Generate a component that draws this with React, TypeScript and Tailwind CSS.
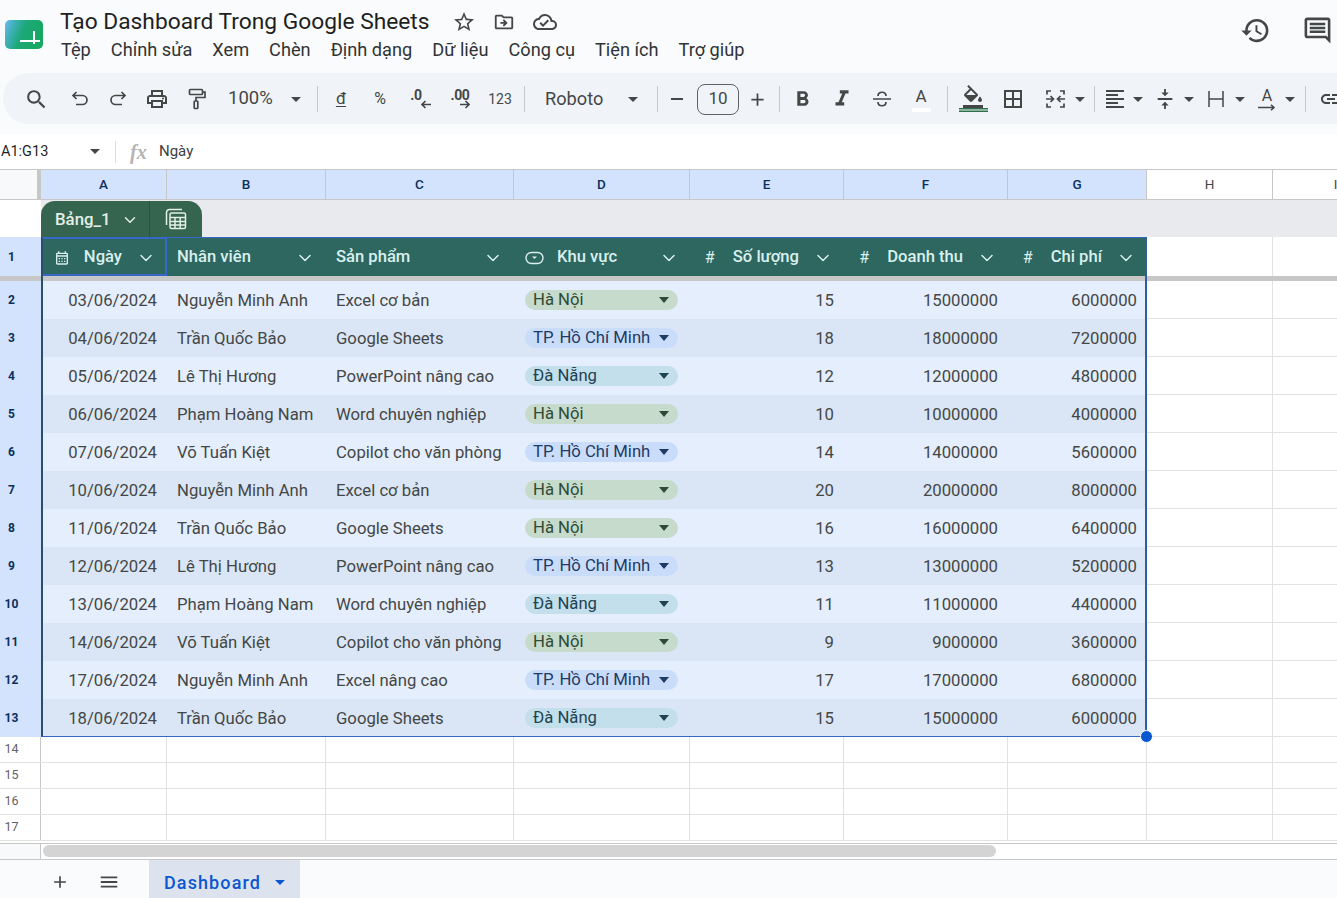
import type { ReactNode } from 'react';
import { ChevronDown } from 'lucide-react';
import {
  MdAdd,
  MdBorderAll,
  MdFormatAlignLeft,
  MdFormatBold,
  MdFormatColorFill,
  MdFormatItalic,
  MdHistory,
  MdLink,
  MdMenu,
  MdOutlineCalendarMonth,
  MdOutlineCloudDone,
  MdOutlineComment,
  MdOutlineDriveFileMove,
  MdOutlinePrint,
  MdSearch,
  MdStarBorder,
  MdVerticalAlignCenter,
} from 'react-icons/md';

const COLS = [
  'w-[126px] shrink-0',
  'w-[159px] shrink-0',
  'w-[188px] shrink-0',
  'w-[176px] shrink-0',
  'w-[154px] shrink-0',
  'w-[164px] shrink-0',
  'w-[139px] shrink-0',
  'w-[126px] shrink-0',
  'w-[126px] shrink-0',
];
const LETTERS = ['A', 'B', 'C', 'D', 'E', 'F', 'G', 'H', 'I'];

const MENU = ['Tệp', 'Chỉnh sửa', 'Xem', 'Chèn', 'Định dạng', 'Dữ liệu', 'Công cụ', 'Tiện ích', 'Trợ giúp'];

type Region = 'Hà Nội' | 'TP. Hồ Chí Minh' | 'Đà Nẵng';

const ROWS: [string, string, string, Region, number, number, number][] = [
  ['03/06/2024', 'Nguyễn Minh Anh', 'Excel cơ bản', 'Hà Nội', 15, 15000000, 6000000],
  ['04/06/2024', 'Trần Quốc Bảo', 'Google Sheets', 'TP. Hồ Chí Minh', 18, 18000000, 7200000],
  ['05/06/2024', 'Lê Thị Hương', 'PowerPoint nâng cao', 'Đà Nẵng', 12, 12000000, 4800000],
  ['06/06/2024', 'Phạm Hoàng Nam', 'Word chuyên nghiệp', 'Hà Nội', 10, 10000000, 4000000],
  ['07/06/2024', 'Võ Tuấn Kiệt', 'Copilot cho văn phòng', 'TP. Hồ Chí Minh', 14, 14000000, 5600000],
  ['10/06/2024', 'Nguyễn Minh Anh', 'Excel cơ bản', 'Hà Nội', 20, 20000000, 8000000],
  ['11/06/2024', 'Trần Quốc Bảo', 'Google Sheets', 'Hà Nội', 16, 16000000, 6400000],
  ['12/06/2024', 'Lê Thị Hương', 'PowerPoint nâng cao', 'TP. Hồ Chí Minh', 13, 13000000, 5200000],
  ['13/06/2024', 'Phạm Hoàng Nam', 'Word chuyên nghiệp', 'Đà Nẵng', 11, 11000000, 4400000],
  ['14/06/2024', 'Võ Tuấn Kiệt', 'Copilot cho văn phòng', 'Hà Nội', 9, 9000000, 3600000],
  ['17/06/2024', 'Nguyễn Minh Anh', 'Excel nâng cao', 'TP. Hồ Chí Minh', 17, 17000000, 6800000],
  ['18/06/2024', 'Trần Quốc Bảo', 'Google Sheets', 'Đà Nẵng', 15, 15000000, 6000000],
];

const PILL: Record<Region, string> = {
  'Hà Nội': 'bg-[#c6dbcb] text-[#2f4a36]',
  'TP. Hồ Chí Minh': 'bg-[#c9ddfb] text-[#1f3a63]',
  'Đà Nẵng': 'bg-[#c2dfeb] text-[#1f4252]',
};

function Slot({ c, children }: { c: string; children?: ReactNode }) {
  return <div className={`flex h-[30px] shrink-0 items-center justify-center ${c}`}>{children}</div>;
}

function Sep({ c = '' }: { c?: string }) {
  return <div className={`h-[26px] w-px shrink-0 bg-[#c7c9cc] ${c}`} />;
}

function Caret({ c = 'w-5' }: { c?: string }) {
  return (
    <Slot c={c}>
      <span className="h-0 w-0 border-x-[5px] border-t-[5px] border-x-transparent border-t-[#444746]" />
    </Slot>
  );
}

function TopBar() {
  return (
    <div className="flex h-[73px] bg-[#f9fbfd] text-[#1f1f1f]">
      <svg className="ml-[5px] mt-[20px] shrink-0" width="38" height="29" viewBox="0 0 38 29">
        <defs>
          <linearGradient id="logo" x1="0" x2="1" y1="0" y2="0.3">
            <stop offset="0" stopColor="#6cbcf0" />
            <stop offset="0.25" stopColor="#3fb0b8" />
            <stop offset="0.55" stopColor="#1ca878" />
            <stop offset="1" stopColor="#17a862" />
          </linearGradient>
        </defs>
        <rect width="38" height="29" rx="5" fill="url(#logo)" />
        <path d="M15 21h20M29 11v13" stroke="#fff" strokeWidth="2" fill="none" />
      </svg>
      <div className="ml-[17px] flex flex-col">
        <div className="mt-[7px] flex h-[30px] items-center">
          <span className="text-[22.75px] leading-[30px] font-normal">Tạo Dashboard Trong Google Sheets</span>
          <MdStarBorder className="ml-[22px] text-[#444746]" size={24} />
          <MdOutlineDriveFileMove className="ml-[17px] text-[#444746]" size={22} />
          <MdOutlineCloudDone className="ml-[18px] text-[#444746]" size={24} />
        </div>
        <nav className="ml-px mt-[1px] flex gap-5 text-[18.2px] leading-[24px] text-[#303335]">
          {MENU.map((m) => (
            <span key={m}>{m}</span>
          ))}
        </nav>
      </div>
      <div className="ml-auto flex items-start pt-[15px]">
        <MdHistory className="text-[#444746]" size={31} />
        <MdOutlineComment className="ml-[31px] mr-[4px] text-[#444746]" size={31} />
      </div>
    </div>
  );
}

function Toolbar() {
  const ic = 'text-[#444746]';
  return (
    <div className="h-[61px] bg-[#f9fbfd]">
      <div className="ml-[3px] flex h-[51px] w-[1400px] items-center rounded-l-[25px] bg-[#f0f4f9] pl-[13px] pt-px text-[#444746]">
        <Slot c="w-[40px]"><MdSearch className={ic} size={25} /></Slot>
        <Slot c="ml-[5px] w-[38px]">
          <svg width="18" height="18" viewBox="0 0 18 18" fill="none" stroke="#444746" strokeWidth="1.7">
            <path d="M5.5 2 2 5.5 5.5 9M2 5.5h9.5a4.5 4.5 0 0 1 0 9H5" />
          </svg>
        </Slot>
        <Slot c="w-[38px]">
          <svg width="18" height="18" viewBox="0 0 18 18" fill="none" stroke="#444746" strokeWidth="1.7">
            <path d="M12.5 2 16 5.5 12.5 9M16 5.5H6.5a4.5 4.5 0 0 0 0 9H13" />
          </svg>
        </Slot>
        <Slot c="w-[40px]"><MdOutlinePrint className={ic} size={24} /></Slot>
        <Slot c="w-[40px]">
          <svg width="18" height="22" viewBox="0 0 18 22" fill="none" stroke="#444746" strokeWidth="1.7">
            <rect x="1.5" y="1.5" width="13" height="5" rx="1" />
            <path d="M14.5 4h2.5v5.5H8v3.5" />
            <rect x="6.2" y="13" width="3.6" height="7.5" rx=".8" />
          </svg>
        </Slot>
        <Slot c="ml-[11px] w-[46px] justify-start"><span className="text-[18.5px]">100%</span></Slot>
        <Caret c="ml-[12px] w-5" />
        <Sep c="ml-[11px]" />
        <Slot c="ml-[4px] w-[38px]"><span className="text-[17px] underline underline-offset-2">đ</span></Slot>
        <Slot c="w-[40px]"><span className="text-[16px]">%</span></Slot>
        <Slot c="w-[40px]">
          <span className="flex flex-col items-center">
            <span className="pr-[8px] text-[14px] leading-[11px] font-bold tracking-tight">.0</span>
            <svg className="ml-[12px] -mt-[1px]" width="10" height="9" viewBox="0 0 10 9" fill="none" stroke="#444746" strokeWidth="1.6"><path d="M10 4.5H1M4.5 1 1 4.5 4.5 8" /></svg>
          </span>
        </Slot>
        <Slot c="w-[40px]">
          <span className="flex flex-col items-center">
            <span className="text-[14px] leading-[11px] font-bold tracking-tight">.00</span>
            <svg className="ml-[10px] -mt-[1px]" width="10" height="9" viewBox="0 0 10 9" fill="none" stroke="#444746" strokeWidth="1.6"><path d="M0 4.5h9M5.5 1 9 4.5 5.5 8" /></svg>
          </span>
        </Slot>
        <Slot c="w-[40px]"><span className="text-[14px]">123</span></Slot>
        <Sep c="ml-[4px]" />
        <Slot c="ml-[20px] w-[60px] justify-start"><span className="text-[18.2px]">Roboto</span></Slot>
        <Caret c="ml-[18px] w-5" />
        <Sep c="ml-[14px]" />
        <Slot c="ml-[8px] w-[22px]"><span className="h-[2px] w-[12px] bg-[#444746]" /></Slot>
        <div className="ml-[9px] flex h-[31px] w-[42px] shrink-0 items-center justify-center rounded-lg border border-[#5f6368] text-[17px]">10</div>
        <Slot c="ml-[7px] w-[22px]"><MdAdd className={ic} size={21} /></Slot>
        <Sep c="ml-[11px]" />
        <Slot c="ml-[3px] w-[38px]"><MdFormatBold className={ic} size={25} /></Slot>
        <Slot c="ml-[1px] w-[40px]"><MdFormatItalic className={ic} size={26} /></Slot>
        <Slot c="w-[39px]">
          <svg width="20" height="20" viewBox="0 0 20 20" fill="none" stroke="#444746" strokeWidth="1.7">
            <path d="M1 10h18M14 7c0-5-8-5-8 0M6 13c0 5 8 5 8 0" />
          </svg>
        </Slot>
        <Slot c="w-[40px]">
          <span className="flex flex-col items-center">
            <span className="text-[17px] leading-[20px]">A</span>
            <span className="mt-[2px] h-[4px] w-[19px] bg-white" />
          </span>
        </Slot>
        <Sep c="ml-[6px]" />
        <Slot c="ml-[10px] w-[30px]">
          <span className="flex flex-col items-center">
            <MdFormatColorFill className={`${ic} -mt-[2px]`} size={24} />
            <span className="-mt-[1px] h-[4px] w-[29px] border-y border-[#2c6e4f] bg-[#8fb5a0]" />
          </span>
        </Slot>
        <Slot c="ml-[10px] w-[30px]"><MdBorderAll className={ic} size={24} /></Slot>
        <Slot c="ml-[12px] w-[30px]">
          <svg width="21" height="20" viewBox="0 0 21 20" fill="none" stroke="#444746" strokeWidth="1.7">
            <path d="M6 2H2v3.5M15 2h4v3.5M6 18H2v-3.5M15 18h4v-3.5M1 10h7M5.5 7 8.5 10l-3 3M20 10h-7M15.5 7l-3 3 3 3" />
          </svg>
        </Slot>
        <Caret c="w-[20px]" />
        <Sep c="ml-[4px]" />
        <Slot c="ml-[5px] w-[30px]"><MdFormatAlignLeft className={ic} size={24} /></Slot>
        <Caret c="-ml-[2px] w-5" />
        <Slot c="ml-[3px] w-[28px]"><MdVerticalAlignCenter className={ic} size={22} /></Slot>
        <Caret c="w-5" />
        <Slot c="ml-[5px] w-[24px]">
          <svg width="16" height="18" viewBox="0 0 16 18" fill="none" stroke="#444746" strokeWidth="1.5">
            <path d="M1 1v16M15 1v16M1 9h14" />
          </svg>
        </Slot>
        <Caret c="ml-[2px] w-5" />
        <Slot c="ml-[5px] w-[24px]">
          <span className="flex flex-col items-center">
            <span className="text-[16px] leading-[15px]">A</span>
            <svg className="mt-[1px]" width="18" height="7" viewBox="0 0 18 7" fill="none" stroke="#444746" strokeWidth="1.5"><path d="M0 3.5h16M13 .8l3 2.7-3 2.7" /></svg>
          </span>
        </Slot>
        <Caret c="ml-[1px] w-5" />
        <Sep c="ml-[5px]" />
        <Slot c="ml-[10px] w-[30px]"><MdLink className={ic} size={24} /></Slot>
      </div>
    </div>
  );
}

function FormulaBar() {
  return (
    <div className="flex h-[36px] items-center border-b border-[#c7c7c7] bg-white text-[14.5px] text-[#1f1f1f]">
      <span className="ml-px w-[89px]">A1:G13</span>
      <span className="h-0 w-0 border-x-[5px] border-t-[5px] border-x-transparent border-t-[#444746]" />
      <span className="ml-[15px] h-[22px] w-px bg-[#dadce0]" />
      <span className="ml-[14px] w-[29px] text-[20px] leading-none font-bold italic text-[#b4b4b4] [font-family:'Liberation_Serif',serif]">fx</span>
      <span className="text-[15px] text-[#3c4043]">Ngày</span>
    </div>
  );
}

function ColumnHeaders() {
  return (
    <div className="flex h-[30px] border-b border-[#c7c7c7] bg-white">
      <div className="w-[41px] shrink-0 border-r-[4px] border-[#c7c7c7] bg-[#f8f9fa]" />
      {COLS.map((w, i) => (
        <div
          key={LETTERS[i]}
          className={`flex items-center justify-center border-r border-[#c4c7c5] text-[13.5px] ${w} ${
            i < 7 ? 'bg-[#d3e3fd] font-medium text-[#0b2f5c]' : 'text-[#444746]'
          }`}
        >
          {LETTERS[i]}
        </div>
      ))}
    </div>
  );
}

function TableNameRow() {
  return (
    <div className="flex h-[37px]">
      <div className="w-[41px] shrink-0 bg-white" />
      <div className="flex-1 bg-[#e8eaed] pt-px">
        <div className="flex h-[36px] w-[161px] rounded-t-[14px] bg-[#35654f] text-[#e3efe8]">
          <div className="flex w-[109px] items-center border-r border-[#2a5240] pl-[14px] pt-px">
            <span className="text-[16.8px] font-medium">Bảng_1</span>
            <ChevronDown className="ml-[10px]" size={18} />
          </div>
          <div className="flex flex-1 items-center justify-center">
            <svg width="22" height="22" viewBox="0 0 22 22" fill="none" stroke="#e3efe8" strokeWidth="1.5">
              <path d="M1.5 17V4.5a3 3 0 0 1 3-3H17" />
              <rect x="5" y="5" width="15.5" height="15.5" rx="1.5" />
              <path d="M5 9.5h15.5M5 13.5h15.5M5 17h15.5M10 9.5v11M15.2 9.5v11" />
            </svg>
          </div>
        </div>
      </div>
    </div>
  );
}

function HeadCell({ w, label, icon, end }: { w: string; label: string; icon?: ReactNode; end?: boolean }) {
  return (
    <div className={`flex items-center pr-[11px] pt-[2px] ${end ? 'justify-end' : 'pl-[10px]'} ${w}`}>
      {icon}
      <span className="text-[16.6px] font-medium whitespace-nowrap text-[#d8f0ee]">{label}</span>
      {end ? (
        <ChevronDown className="ml-[14px] shrink-0 text-[#d8f0ee]" size={20} strokeWidth={1.8} />
      ) : (
        <ChevronDown className="ml-auto shrink-0 text-[#d8f0ee]" size={20} strokeWidth={1.8} />
      )}
    </div>
  );
}

function Hash() {
  return <span className="mr-[13px] w-[20px] text-center text-[16px] text-[#d8f0ee]">#</span>;
}

function HeaderRow() {
  return (
    <div className="flex h-[39px]">
      <div className="flex w-[41px] shrink-0 items-center bg-[#d3e3fd] pt-px">
        <span className="w-[23px] text-center text-[12px] font-bold text-[#0b2f5c]">1</span>
      </div>
      <div className="flex w-[1106px] shrink-0 bg-[#2e6660]">
        <HeadCell
          w={`${COLS[0]} outline-2 -outline-offset-2 outline-[#3568c8]`}
          label="Ngày"
          end
          icon={<MdOutlineCalendarMonth className="mr-[14px] text-[#d8f0ee]" size={16} />}
        />
        <HeadCell w={COLS[1]} label="Nhân viên" />
        <HeadCell w={COLS[2]} label="Sản phẩm" />
        <HeadCell
          w={COLS[3]}
          label="Khu vực"
          icon={
            <svg className="mr-[13px] ml-[1px]" width="19" height="14" viewBox="0 0 19 14" fill="none" stroke="#d8f0ee" strokeWidth="1.4">
              <rect x="1" y="1.5" width="17" height="11" rx="5.5" />
              <path d="M7 5.5h5L9.5 8z" fill="#d8f0ee" stroke="none" />
            </svg>
          }
        />
        <HeadCell w={COLS[4]} label="Số lượng" end icon={<Hash />} />
        <HeadCell w={COLS[5]} label="Doanh thu" end icon={<Hash />} />
        <HeadCell w={COLS[6]} label="Chi phí" end icon={<Hash />} />
      </div>
      <div className={`${COLS[7]} border-r border-[#e1e3e1] bg-white`} />
    </div>
  );
}

function DataRow({ n, row }: { n: number; row: (typeof ROWS)[number] }) {
  const [date, staff, product, region, qty, rev, cost] = row;
  const band = n % 2 === 0 ? 'bg-[#e4eefd]' : 'bg-[#dae6f5]';
  return (
    <div className="flex h-[38px]">
      <div className="flex w-[41px] shrink-0 items-center bg-[#d3e3fd]">
        <span className="w-[23px] text-center text-[12px] font-bold text-[#0b2f5c]">{n}</span>
      </div>
      <div className={`flex w-[1106px] shrink-0 items-center pt-[1px] text-[16.7px] text-[#444746] ${band}`}>
        <div className={`${COLS[0]} pr-[10px] text-right`}>{date}</div>
        <div className={`${COLS[1]} pl-[10px]`}>{staff}</div>
        <div className={`${COLS[2]} pl-[10px]`}>{product}</div>
        <div className={COLS[3]}>
          <div className={`ml-[11px] -mt-px flex h-5 w-[153px] items-center rounded-full pl-2 ${PILL[region]}`}>
            <span>{region}</span>
            <span className="ml-auto mr-[9px] h-0 w-0 border-x-[5.5px] border-t-[6px] border-x-transparent border-t-current" />
          </div>
        </div>
        <div className={`${COLS[4]} pr-[10px] text-right`}>{qty}</div>
        <div className={`${COLS[5]} pr-[10px] text-right`}>{rev}</div>
        <div className={`${COLS[6]} pr-[10px] text-right`}>{cost}</div>
      </div>
      <div className={`${COLS[7]} border-r border-b border-[#e1e3e1] bg-white`} />
      <div className="flex-1 border-b border-[#e1e3e1] bg-white" />
    </div>
  );
}

function EmptyRow({ n }: { n: number }) {
  return (
    <div className="flex h-[26px] border-b border-[#e1e3e1] bg-white">
      <div className="flex w-[41px] shrink-0 items-center border-r border-[#c7c7c7] pb-px">
        <span className="w-[23px] text-center text-[12.5px] text-[#5f6368]">{n}</span>
      </div>
      {COLS.map((w, i) => (
        <div key={LETTERS[i]} className={`border-r border-[#e1e3e1] ${w}`} />
      ))}
    </div>
  );
}

function Grid() {
  return (
    <div className="relative">
      <TableNameRow />
      <HeaderRow />
      <div className="h-[5px] bg-[#c7c7c7]" />
      {ROWS.map((row, i) => (
        <DataRow key={i} n={i + 2} row={row} />
      ))}
      {[14, 15, 16, 17].map((n) => (
        <EmptyRow key={n} n={n} />
      ))}
      {/* selection box A1:G13 */}
      <div className="pointer-events-none absolute top-[37px] left-[41px] h-[500px] w-[1106px] border-t border-r-2 border-b border-l-2 border-t-[#3568c8] border-r-[#2c5f9e] border-b-[#3568c8] border-l-[#28506a]" />
      <div className="absolute top-[530px] left-[1140px] h-[13px] w-[13px] rounded-full border border-white bg-[#0b57d0]" />
    </div>
  );
}

function Scrollbar() {
  return (
    <div className="mt-[2px] flex h-[17px] border-y border-[#c7c7c7] bg-white">
      <div className="w-[41px] border-r border-[#c7c7c7] bg-[#f8f9fa]" />
      <div className="pl-[2px] pt-[1px]">
        <div className="h-3 w-[953px] rounded-full bg-[#d4d4d4]" />
      </div>
    </div>
  );
}

function SheetTabs() {
  return (
    <div className="flex h-[38px] items-center bg-[#f9fbfd] text-[#444746]">
      <MdAdd className="ml-[50px] mt-[6px]" size={20} />
      <MdMenu className="ml-[28px] mt-[6px]" size={22} />
      <div className="ml-[29px] flex h-full w-[151px] items-center bg-[#dde3ee] pl-[15px] pt-[6px] text-[#0b57d0]">
        <span className="text-[18px] font-medium tracking-[1.1px]">Dashboard</span>
        <span className="ml-[14px] h-0 w-0 border-x-[5px] border-t-[5px] border-x-transparent border-t-[#0b57d0]" />
      </div>
    </div>
  );
}

export default function App() {
  return (
    <div className="h-[898px] w-[1337px] overflow-hidden bg-white [font-family:Roboto,sans-serif]">
      <TopBar />
      <Toolbar />
      <FormulaBar />
      <ColumnHeaders />
      <Grid />
      <Scrollbar />
      <SheetTabs />
    </div>
  );
}
